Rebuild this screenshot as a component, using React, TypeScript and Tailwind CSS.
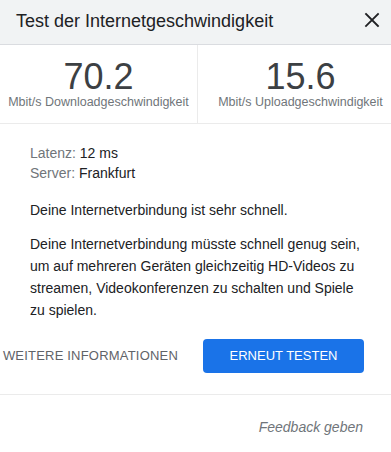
import React from "react";

const stats = [
  { value: "70.2", label: "Mbit/s Downloadgeschwindigkeit" },
  { value: "15.6", label: "Mbit/s Uploadgeschwindigkeit" },
];

const CloseIcon = () => (
  <svg width="16" height="16" viewBox="0 0 16 16" fill="none">
    <path
      d="M2 2L14 14M14 2L2 14"
      stroke="#202124"
      strokeWidth="1.8"
      strokeLinecap="square"
    />
  </svg>
);

const App = () => {
  return (
    <div
      className="w-[391px] h-[452px] overflow-hidden bg-white text-[#202124]"
      style={{ fontFamily: '"Liberation Sans", Arial, sans-serif' }}
    >
      {/* header */}
      <div className="h-[45px] flex items-center justify-between pl-4 pr-[11px] bg-[#f1f3f4] border-b border-[#dadce0]">
        <h1 className="text-[18px] leading-6 pb-[2px] text-[#202124]">
          Test der Internetgeschwindigkeit
        </h1>
        <button className="w-[16px] h-[16px] flex items-center justify-center mb-[5px]">
          <CloseIcon />
        </button>
      </div>

      {/* results */}
      <div className="w-[403px] grid grid-cols-[197px_206px] border-b border-[#ebebeb]">
        {stats.map((s, i) => (
          <div
            key={s.label}
            className={`flex flex-col items-center pt-[15px] pb-[13px] ${
              i === 1 ? "border-l border-[#ebebeb]" : ""
            }`}
          >
            <span className="text-[36px] leading-[34px] text-[#3c4043]">
              {s.value}
            </span>
            <span className="text-[12.5px] leading-4 text-[#70757a] whitespace-nowrap">
              {s.label}
            </span>
          </div>
        ))}
      </div>

      {/* details */}
      <div className="pl-[30px] pr-[26px] pt-[19px] text-[14px]">
        <div className="leading-5">
          <span className="text-[#70757a]">Latenz:</span> 12 ms
        </div>
        <div className="leading-5">
          <span className="text-[#70757a]">Server:</span> Frankfurt
        </div>
        <p className="mt-4 leading-[22px]">
          Deine Internetverbindung ist sehr schnell.
        </p>
        <p className="mt-3 leading-[22px]">
          Deine Internetverbindung müsste schnell genug sein, um auf mehreren
          Geräten gleichzeitig HD-Videos zu streamen, Videokonferenzen zu
          schalten und Spiele zu spielen.
        </p>
      </div>

      {/* actions */}
      <div className="mt-[18px] flex items-center justify-end pr-[27px]">
        <button className="mr-[25px] text-[13px] tracking-[0.2px] text-[#5f6368] whitespace-nowrap">
          WEITERE INFORMATIONEN
        </button>
        <button className="w-[161px] h-[34px] rounded-[4px] bg-[#1a73e8] text-white text-[13px]">
          ERNEUT TESTEN
        </button>
      </div>

      <div className="mt-[21px] border-t border-[#ebebeb]" />

      <div className="pt-[22px] pr-[28px] flex justify-end">
        <span className="italic text-[14px] leading-5 text-[#70757a]">
          Feedback geben
        </span>
      </div>
    </div>
  );
};

export default App;
